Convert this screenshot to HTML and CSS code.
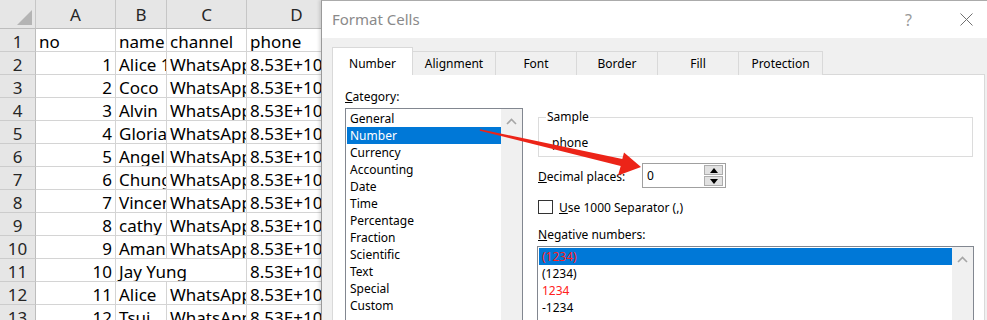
FILE: index.html
```html
<!DOCTYPE html>
<html>
<head>
<meta charset="utf-8">
<link rel="stylesheet" href="styles.css">
</head>
<body>
<div class="page">
  <div class="sheet">
    <div class="c hd corner"><span class="tri"></span></div>
    <div class="c hd">A</div><div class="c hd">B</div><div class="c hd">C</div><div class="c hd">D</div>

    <div class="c rh">1</div><div class="c">no</div><div class="c">name</div><div class="c">channel</div><div class="c">phone</div>
    <div class="c rh">2</div><div class="c num">1</div><div class="c">Alice 12</div><div class="c">WhatsApp</div><div class="c">8.53E+10</div>
    <div class="c rh">3</div><div class="c num">2</div><div class="c">Coco</div><div class="c">WhatsApp</div><div class="c">8.53E+10</div>
    <div class="c rh">4</div><div class="c num">3</div><div class="c">Alvin</div><div class="c">WhatsApp</div><div class="c">8.53E+10</div>
    <div class="c rh">5</div><div class="c num">4</div><div class="c">Gloria</div><div class="c">WhatsApp</div><div class="c">8.53E+10</div>
    <div class="c rh">6</div><div class="c num">5</div><div class="c">Angel</div><div class="c">WhatsApp</div><div class="c">8.53E+10</div>
    <div class="c rh">7</div><div class="c num">6</div><div class="c">Chung Ka</div><div class="c">WhatsApp</div><div class="c">8.53E+10</div>
    <div class="c rh">8</div><div class="c num">7</div><div class="c">Vincent</div><div class="c">WhatsApp</div><div class="c">8.53E+10</div>
    <div class="c rh">9</div><div class="c num">8</div><div class="c">cathy Li</div><div class="c">WhatsApp</div><div class="c">8.53E+10</div>
    <div class="c rh">10</div><div class="c num">9</div><div class="c">Amansa</div><div class="c">WhatsApp</div><div class="c">8.53E+10</div>
    <div class="c rh">11</div><div class="c num">10</div><div class="c span2">Jay Yung</div><div class="c">8.53E+10</div>
    <div class="c rh">12</div><div class="c num">11</div><div class="c">Alice</div><div class="c">WhatsApp</div><div class="c">8.53E+10</div>
    <div class="c rh">13</div><div class="c num">12</div><div class="c">Tsui</div><div class="c">WhatsApp</div><div class="c">8.53E+10</div>
  </div>

  <div class="dialog">
    <div class="titlebar">
      <span class="title">Format Cells</span>
      <span class="help">?</span>
      <svg class="close" width="13" height="13" viewBox="0 0 13 13"><path d="M0.5 0.5 L12.5 12.5 M12.5 0.5 L0.5 12.5" stroke="#707070" stroke-width="1" fill="none"/></svg>
    </div>
    <div class="dbody">
      <div class="tabs">
        <div class="tab active">Number</div>
        <div class="tab">Alignment</div>
        <div class="tab">Font</div>
        <div class="tab">Border</div>
        <div class="tab">Fill</div>
        <div class="tab">Protection</div>
      </div>
      <div class="panel">
        <div class="leftcol">
          <div class="lbl"><u>C</u>ategory:</div>
          <div class="listbox catlist">
            <div class="items">
              <div class="item">General</div>
              <div class="item sel">Number</div>
              <div class="item">Currency</div>
              <div class="item">Accounting</div>
              <div class="item">Date</div>
              <div class="item">Time</div>
              <div class="item">Percentage</div>
              <div class="item">Fraction</div>
              <div class="item">Scientific</div>
              <div class="item">Text</div>
              <div class="item">Special</div>
              <div class="item">Custom</div>
            </div>
            <div class="vscroll"><svg width="11" height="7" viewBox="0 0 11 7"><path d="M1 6 L5.5 1.5 L10 6" stroke="#a6a6a6" stroke-width="1.6" fill="none"/></svg></div>
          </div>
        </div>
        <div class="rightcol">
          <fieldset class="sample">
            <legend>Sample</legend>
            <div class="sampleval">phone</div>
          </fieldset>
          <div class="decrow">
            <span class="declbl"><u>D</u>ecimal places:</span>
            <div class="spin">
              <span class="spinval">0</span>
              <div class="spinbtns">
                <div class="sb"><svg width="8" height="5" viewBox="0 0 8 5"><path d="M0 5 L4 0 L8 5 Z" fill="#000"/></svg></div>
                <div class="sb"><svg width="8" height="5" viewBox="0 0 8 5"><path d="M0 0 L8 0 L4 5 Z" fill="#000"/></svg></div>
              </div>
            </div>
          </div>
          <div class="check"><span class="box"></span><span><u>U</u>se 1000 Separator (,)</span></div>
          <div class="lbl neglbl"><u>N</u>egative numbers:</div>
          <div class="listbox neglist">
            <div class="items">
              <div class="item sel red">(1234)</div>
              <div class="item">(1234)</div>
              <div class="item red">1234</div>
              <div class="item">-1234</div>
            </div>
            <div class="vscroll"><svg width="11" height="7" viewBox="0 0 11 7"><path d="M1 6 L5.5 1.5 L10 6" stroke="#a6a6a6" stroke-width="1.6" fill="none"/></svg></div>
          </div>
        </div>
      </div>
    </div>
  </div>

  <svg class="arrow" width="987" height="320" viewBox="0 0 987 320">
    <polygon points="480,129.2 622.3,159.1 624,152.5 641,167 618,175.5 620.7,165.9 479.8,130.8" fill="#ec2418"/>
  </svg>
</div>
</body>
</html>
```

FILE: styles.css
```css
html, body {
  margin: 0;
  padding: 0;
  background: #ffffff;
}

.page {
  position: relative;
  width: 987px;
  height: 320px;
  overflow: hidden;
}

.arrow {
  position: absolute;
  left: 0;
  top: 0;
  pointer-events: none;
  z-index: 5;
}

/* ---------- spreadsheet ---------- */
.sheet {
  display: grid;
  grid-template-columns: 36px 80px 51px 80px 100px;
  grid-template-rows: 29px;
  grid-auto-rows: 23px;
  font-family: "Noto Sans", "Liberation Sans", sans-serif;
  font-size: 17px;
  color: #000;
}

.c {
  box-sizing: border-box;
  border-right: 1px solid #d4d4d4;
  border-bottom: 1px solid #d4d4d4;
  overflow: hidden;
  white-space: nowrap;
  padding: 2px 3px 0 3px;
  display: flex;
  align-items: center;
  line-height: 1;
}

.num {
  justify-content: flex-end;
}

.span2 {
  grid-column: span 2;
}

.hd {
  background: #e6e6e6;
  border-right: 1px solid #c6c6c6;
  border-bottom: 1px solid #bdbdbd;
  justify-content: center;
  color: #262626;
  padding: 0;
}

.rh {
  background: #e6e6e6;
  border-right: 1px solid #bdbdbd;
  border-bottom: 1px solid #cccccc;
  justify-content: center;
  color: #262626;
  padding: 2px 0 0 0;
}

.corner {
  justify-content: flex-end;
  align-items: flex-end;
  padding: 0 3px 3px 0;
}

.tri {
  display: block;
  width: 15px;
  height: 15px;
  background: #b4b4b4;
  clip-path: polygon(100% 0, 100% 100%, 0 100%);
}

/* ---------- dialog ---------- */
.dialog {
  position: absolute;
  left: 321px;
  top: 0;
  width: 666px;
  height: 330px;
  box-sizing: border-box;
  border-left: 1px solid #9a9a9a;
  border-top: 1px solid #ababab;
  background: #f0f0f0;
  box-shadow: -2px 0 3px rgba(0, 0, 0, 0.12);
  font-family: "Noto Sans", "Liberation Sans", sans-serif;
  font-size: 12px;
  color: #000;
  display: flex;
  flex-direction: column;
}

.titlebar {
  height: 37px;
  background: #ffffff;
  display: flex;
  align-items: center;
  padding-left: 10px;
  flex-shrink: 0;
}

.title {
  font-size: 15px;
  color: #8a8a8a;
  flex: 1;
  padding-bottom: 1px;
}

.help {
  font-size: 16px;
  color: #9a9a9a;
  margin-right: 48px;
}

.close {
  margin-right: 14px;
}

.dbody {
  flex: 1;
  padding: 9px 2px 0 10px;
  display: flex;
  flex-direction: column;
}

.tabs {
  display: flex;
  align-items: flex-end;
  height: 28px;
  position: relative;
  z-index: 1;
}

.tab {
  box-sizing: border-box;
  height: 24px;
  width: 82px;
  margin-left: -1px;
  border: 1px solid #d9d9d9;
  border-bottom: none;
  background: #f0f0f0;
  display: flex;
  align-items: center;
  justify-content: center;
  padding-bottom: 1px;
}

.tab:first-child {
  margin-left: 0;
}

.tab:nth-child(2) { width: 84px; }
.tab:nth-child(6) { width: 85px; }

.tab.active {
  height: 28px;
  background: #ffffff;
  width: 81px;
  padding: 3px 0 0 0;
}

.panel {
  flex: 1;
  margin-top: -1px;
  background: #ffffff;
  border: 1px solid #d9d9d9;
  padding: 14px 10px 0 12px;
  display: flex;
  gap: 15px;
}

.lbl {
  line-height: 16px;
  height: 16px;
}

.leftcol {
  width: 178px;
  flex-shrink: 0;
}

.listbox {
  box-sizing: border-box;
  border: 1px solid #828790;
  background: #ffffff;
  display: flex;
  padding: 1px;
}

.catlist {
  margin-top: 3px;
  height: 230px;
}

.items {
  flex: 1;
}

.item {
  height: 17px;
  line-height: 18px;
  padding-left: 3px;
  white-space: nowrap;
}

.item.sel {
  background: #0078d7;
  color: #ffffff;
}

.item.red {
  color: #ff2020;
}

.vscroll {
  width: 21px;
  margin: -1px -1px -1px 0;
  background: #f0f0f0;
  display: flex;
  justify-content: center;
  align-items: flex-start;
  padding-top: 9px;
}

.rightcol {
  width: 436px;
  display: flex;
  flex-direction: column;
  align-items: flex-start;
}

.sample {
  box-sizing: border-box;
  width: 435px;
  margin: 20px 0 0 0;
  padding: 0 0 5px 7px;
  border: 1px solid #dcdcdc;
  min-width: 0;
}

.sample legend {
  padding: 0 1px;
  line-height: 16px;
}

.sampleval {
  padding: 10px 0 0 6px;
  line-height: 16px;
  height: 16px;
}

.decrow {
  margin-top: 6px;
  display: flex;
  align-items: center;
  height: 25px;
}

.declbl {
  width: 104px;
  padding-top: 1px;
}

.spin {
  box-sizing: border-box;
  width: 84px;
  height: 25px;
  border: 1px solid #a0a0a0;
  display: flex;
  align-items: center;
  padding: 0 2px 0 4px;
}

.spinval {
  flex: 1;
}

.spinbtns {
  display: flex;
  flex-direction: column;
  gap: 1px;
}

.sb {
  box-sizing: border-box;
  width: 19px;
  height: 10px;
  background: #e1e1e1;
  border: 1px solid #adadad;
  display: flex;
  align-items: center;
  justify-content: center;
}

.check {
  margin-top: 12px;
  display: flex;
  align-items: center;
  gap: 6px;
  height: 14px;
}

.box {
  box-sizing: border-box;
  width: 15px;
  height: 14px;
  border: 1px solid #333333;
  background: #ffffff;
}

.neglbl {
  margin-top: 13px;
}

.neglist {
  margin: 3px 0 0 -1px;
  width: 437px;
  height: 90px;
}
```
